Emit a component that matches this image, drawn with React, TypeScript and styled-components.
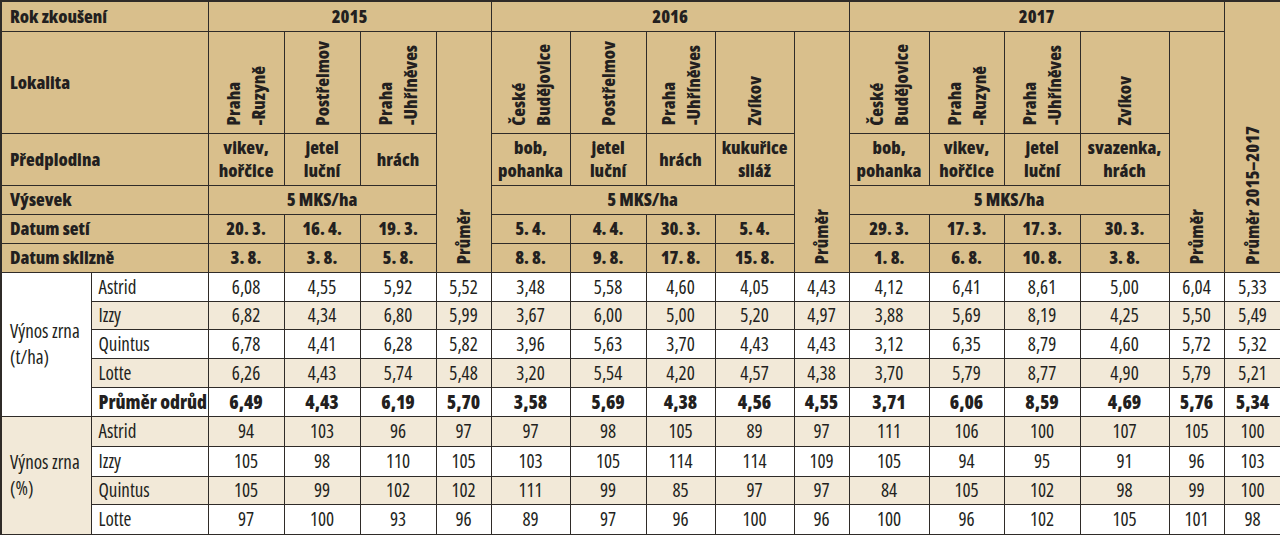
import React from "react";
import styled, { createGlobalStyle } from "styled-components";

const GlobalStyle = createGlobalStyle`
  html, body { margin: 0; padding: 0; background: #ffffff; }
  body {
    font-family: "Open Sans", "Noto Sans", sans-serif;
    font-stretch: 75%;
    color: #231f20;
  }
`;

const HEAD = "#d9bf8c";
const ALT = "#f2e9d8";
const LINE = "#2f2b28";

const Table = styled.table`
  border-collapse: collapse;
  table-layout: fixed;
  width: 1280px;
  font-size: 18px;
  border-top: 2px solid ${LINE};
  border-left: 2px solid ${LINE};
`;

const HeadRow = styled.tr<{ $h: number }>`
  height: ${(p) => p.$h}px;
`;

const HeadCell = styled.th<{ $left?: boolean; $bottom?: boolean }>`
  background: ${HEAD};
  border: 1px solid ${LINE};
  font-weight: 800;
  text-align: ${(p) => (p.$left ? "left" : "center")};
  vertical-align: ${(p) => (p.$bottom ? "bottom" : "middle")};
  padding: ${(p) => (p.$bottom ? "0 0 7px 0" : p.$left ? "0 0 0 8px" : "0")};
  line-height: ${(p) => (p.$bottom ? "0" : "23px")};
  white-space: nowrap;
`;

const Rotated = styled.div`
  display: inline-block;
  vertical-align: bottom;
  writing-mode: vertical-rl;
  transform: rotate(180deg);
  text-align: start;
  line-height: 25px;
  white-space: nowrap;
`;

const DataRow = styled.tr<{ $alt?: boolean; $bold?: boolean; $h: number }>`
  height: ${(p) => p.$h}px;
  background: ${(p) => (p.$alt ? ALT : "#ffffff")};
  font-weight: ${(p) => (p.$bold ? 800 : 400)};
`;

const GroupCell = styled.td<{ $alt?: boolean }>`
  background: ${(p) => (p.$alt ? ALT : "#ffffff")};
  border: 1px solid ${LINE};
  padding: 0 0 0 8px;
  line-height: 26px;
  vertical-align: middle;
  font-weight: 400;
  font-size: 19px;
  white-space: nowrap;
`;

const NameCell = styled.td`
  border: 1px solid ${LINE};
  padding: 0 0 0 7px;
  text-align: left;
  white-space: nowrap;
  font-size: 19px;
`;

const NumCell = styled.td`
  border: 1px solid ${LINE};
  padding: 0;
  text-align: center;
  font-size: 19px;
`;

const widths = [90, 117, 76, 76, 76, 55, 79, 76, 69, 79, 55, 80, 75, 76, 89, 55, 57];

type Year = {
  year: string;
  locs: string[][];
  crops: string[][];
  sow: string[];
  harvest: string[];
};

const years: Year[] = [
  {
    year: "2015",
    locs: [["Praha", "-Ruzyně"], ["Postřelmov"], ["Praha", "-Uhříněves"]],
    crops: [["vikev,", "hořčice"], ["jetel", "luční"], ["hrách"]],
    sow: ["20. 3.", "16. 4.", "19. 3."],
    harvest: ["3. 8.", "3. 8.", "5. 8."],
  },
  {
    year: "2016",
    locs: [["České", "Budějovice"], ["Postřelmov"], ["Praha", "-Uhříněves"], ["Zvíkov"]],
    crops: [["bob,", "pohanka"], ["jetel", "luční"], ["hrách"], ["kukuřice", "siláž"]],
    sow: ["5. 4.", "4. 4.", "30. 3.", "5. 4."],
    harvest: ["8. 8.", "9. 8.", "17. 8.", "15. 8."],
  },
  {
    year: "2017",
    locs: [["České", "Budějovice"], ["Praha", "-Ruzyně"], ["Praha", "-Uhříněves"], ["Zvíkov"]],
    crops: [["bob,", "pohanka"], ["vikev,", "hořčice"], ["jetel", "luční"], ["svazenka,", "hrách"]],
    sow: ["29. 3.", "17. 3.", "17. 3.", "30. 3."],
    harvest: ["1. 8.", "6. 8.", "10. 8.", "3. 8."],
  },
];

const tons: [string, string[]][] = [
  ["Astrid", ["6,08", "4,55", "5,92", "5,52", "3,48", "5,58", "4,60", "4,05", "4,43", "4,12", "6,41", "8,61", "5,00", "6,04", "5,33"]],
  ["Izzy", ["6,82", "4,34", "6,80", "5,99", "3,67", "6,00", "5,00", "5,20", "4,97", "3,88", "5,69", "8,19", "4,25", "5,50", "5,49"]],
  ["Quintus", ["6,78", "4,41", "6,28", "5,82", "3,96", "5,63", "3,70", "4,43", "4,43", "3,12", "6,35", "8,79", "4,60", "5,72", "5,32"]],
  ["Lotte", ["6,26", "4,43", "5,74", "5,48", "3,20", "5,54", "4,20", "4,57", "4,38", "3,70", "5,79", "8,77", "4,90", "5,79", "5,21"]],
  ["Průměr odrůd", ["6,49", "4,43", "6,19", "5,70", "3,58", "5,69", "4,38", "4,56", "4,55", "3,71", "6,06", "8,59", "4,69", "5,76", "5,34"]],
];

const pct: [string, string[]][] = [
  ["Astrid", ["94", "103", "96", "97", "97", "98", "105", "89", "97", "111", "106", "100", "107", "105", "100"]],
  ["Izzy", ["105", "98", "110", "105", "103", "105", "114", "114", "109", "105", "94", "95", "91", "96", "103"]],
  ["Quintus", ["105", "99", "102", "102", "111", "99", "85", "97", "97", "84", "105", "102", "98", "99", "100"]],
  ["Lotte", ["97", "100", "93", "96", "89", "97", "96", "100", "96", "100", "96", "102", "105", "101", "98"]],
];

const tonHeights = [29, 28, 29, 29, 29];
const pctHeights = [30, 30, 28, 30];

const Lines = ({ parts }: { parts: string[] }) => (
  <>
    {parts.map((t, i) => (
      <React.Fragment key={i}>
        {i > 0 && <br />}
        {t}
      </React.Fragment>
    ))}
  </>
);

export default function App() {
  return (
    <>
      <GlobalStyle />
      <Table>
        <colgroup>
          {widths.map((w, i) => (
            <col key={i} style={{ width: w }} />
          ))}
        </colgroup>
        <thead>
          <HeadRow $h={30}>
            <HeadCell colSpan={2} $left>Rok zkoušení</HeadCell>
            {years.map((y) => (
              <HeadCell key={y.year} colSpan={y.locs.length + 1}>{y.year}</HeadCell>
            ))}
            <HeadCell rowSpan={6} $bottom>
              <Rotated>Průměr 2015–2017</Rotated>
            </HeadCell>
          </HeadRow>
          <HeadRow $h={102}>
            <HeadCell colSpan={2} $left>Lokalita</HeadCell>
            {years.map((y) => (
              <React.Fragment key={y.year}>
                {y.locs.map((l, i) => (
                  <HeadCell key={i} $bottom>
                    <Rotated><Lines parts={l} /></Rotated>
                  </HeadCell>
                ))}
                <HeadCell rowSpan={5} $bottom>
                  <Rotated>Průměr</Rotated>
                </HeadCell>
              </React.Fragment>
            ))}
          </HeadRow>
          <HeadRow $h={52}>
            <HeadCell colSpan={2} $left>Předplodina</HeadCell>
            {years.map((y) =>
              y.crops.map((c, i) => (
                <HeadCell key={y.year + i}><Lines parts={c} /></HeadCell>
              ))
            )}
          </HeadRow>
          <HeadRow $h={29}>
            <HeadCell colSpan={2} $left>Výsevek</HeadCell>
            {years.map((y) => (
              <HeadCell key={y.year} colSpan={y.locs.length}>5 MKS/ha</HeadCell>
            ))}
          </HeadRow>
          <HeadRow $h={29}>
            <HeadCell colSpan={2} $left>Datum setí</HeadCell>
            {years.map((y) =>
              y.sow.map((d, i) => <HeadCell key={y.year + i}>{d}</HeadCell>)
            )}
          </HeadRow>
          <HeadRow $h={29}>
            <HeadCell colSpan={2} $left>Datum sklizně</HeadCell>
            {years.map((y) =>
              y.harvest.map((d, i) => <HeadCell key={y.year + i}>{d}</HeadCell>)
            )}
          </HeadRow>
        </thead>
        <tbody>
          {tons.map(([name, vals], r) => (
            <DataRow key={"t" + name} $h={tonHeights[r]} $alt={r % 2 === 1} $bold={r === 4}>
              {r === 0 && (
                <GroupCell rowSpan={5}>
                  Výnos zrna
                  <br />
                  (t/ha)
                </GroupCell>
              )}
              <NameCell>{name}</NameCell>
              {vals.map((v, i) => (
                <NumCell key={i}>{v}</NumCell>
              ))}
            </DataRow>
          ))}
          {pct.map(([name, vals], r) => (
            <DataRow key={"p" + name} $h={pctHeights[r]} $alt={r % 2 === 0}>
              {r === 0 && (
                <GroupCell rowSpan={4} $alt>
                  Výnos zrna
                  <br />
                  (%)
                </GroupCell>
              )}
              <NameCell>{name}</NameCell>
              {vals.map((v, i) => (
                <NumCell key={i}>{v}</NumCell>
              ))}
            </DataRow>
          ))}
        </tbody>
      </Table>
    </>
  );
}
